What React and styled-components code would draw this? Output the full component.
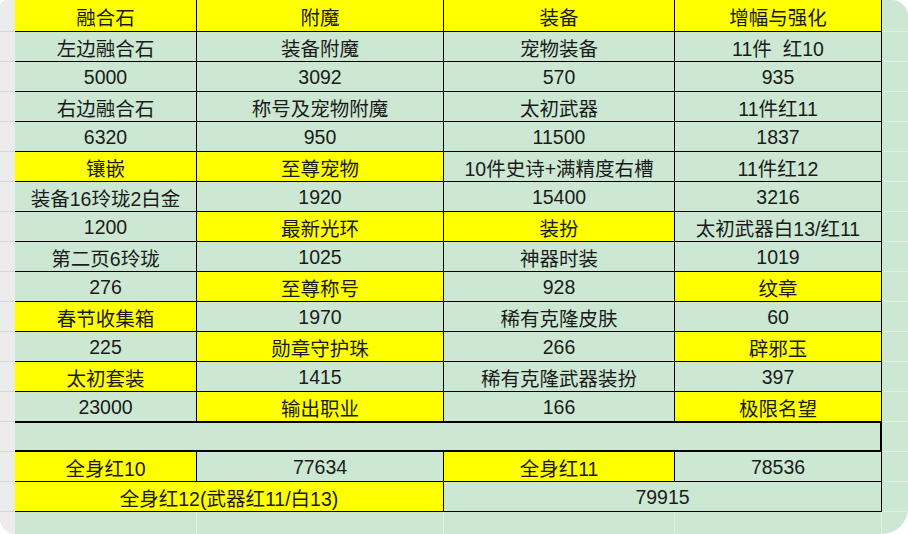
import React from 'react';
import styled, { createGlobalStyle } from 'styled-components';

const GlobalStyle = createGlobalStyle`
  html, body {
    margin: 0;
    padding: 0;
    background: #ffffff;
  }
  * {
    box-sizing: border-box;
  }
`;

const Window = styled.div`
  width: 908px;
  height: 534px;
  display: flex;
  overflow: hidden;
  background-color: #cce8d3;
  border-radius: 8px 16px 26px 16px;
`;

const RowHeaders = styled.div`
  width: 15px;
  display: flex;
  flex-direction: column;
  background-color: #ececec;
`;

const RowHead = styled.div`
  height: ${(p) => (p.$first ? 32 : 30)}px;
  flex: none;
  border-bottom: 1px solid #d6d6d6;
`;

const Sheet = styled.div`
  flex: 1;
  display: grid;
  grid-template-columns: 182px 247px 231px 207px 1fr;
  grid-template-rows: 32px;
  grid-auto-rows: 30px;
  font-family: "Liberation Sans", "Noto Sans CJK SC", sans-serif;
  font-size: 19.5px;
  color: #1b1b1b;
`;

const Cell = styled.div`
  grid-column: span ${(p) => p.$span || 1};
  display: flex;
  align-items: center;
  justify-content: center;
  white-space: nowrap;
  background-color: ${(p) => (p.$fill === 'y' ? '#ffff00' : '#cce8d3')};
  border-right: 1px solid #000;
  border-bottom: 1px solid #000;
  padding-top: 1px;
`;

// the empty separator row drawn with a heavy outline
const BlankBand = styled.div`
  grid-column: span 4;
  border-top: 1px solid #000;
  border-right: 2px solid #000;
  border-bottom: 2px solid #000;
`;

const Filler = styled.div`
  border-bottom: 1px solid #e0f0e4;
`;

const FootCell = styled.div`
  border-right: 1px solid #ddeee2;
`;

const rows = [
  [['融合石', 'y'], ['附魔', 'y'], ['装备', 'y'], ['增幅与强化', 'y']],
  [['左边融合石'], ['装备附魔'], ['宠物装备'], ['11件\u00a0\u00a0红10']],
  [['5000'], ['3092'], ['570'], ['935']],
  [['右边融合石'], ['称号及宠物附魔'], ['太初武器'], ['11件红11']],
  [['6320'], ['950'], ['11500'], ['1837']],
  [['镶嵌', 'y'], ['至尊宠物', 'y'], ['10件史诗+满精度右槽'], ['11件红12']],
  [['装备16玲珑2白金'], ['1920'], ['15400'], ['3216']],
  [['1200'], ['最新光环', 'y'], ['装扮', 'y'], ['太初武器白13/红11']],
  [['第二页6玲珑'], ['1025'], ['神器时装'], ['1019']],
  [['276'], ['至尊称号', 'y'], ['928'], ['纹章', 'y']],
  [['春节收集箱', 'y'], ['1970'], ['稀有克隆皮肤'], ['60']],
  [['225'], ['勋章守护珠', 'y'], ['266'], ['辟邪玉', 'y']],
  [['太初套装', 'y'], ['1415'], ['稀有克隆武器装扮'], ['397']],
  [['23000'], ['输出职业', 'y'], ['166'], ['极限名望', 'y']],
];

const totals = [
  [['全身红10', 'y'], ['77634'], ['全身红11', 'y'], ['78536']],
  [['全身红12(武器红11/白13)', 'y', 2], ['79915', 'g', 2]],
];

const renderRow = (row, i) => (
  <React.Fragment key={i}>
    {row.map(([text, fill, span], j) => (
      <Cell key={j} $fill={fill} $span={span}>
        {text}
      </Cell>
    ))}
    <Filler />
  </React.Fragment>
);

const App = () => (
  <>
    <GlobalStyle />
    <Window>
      <RowHeaders>
        {Array.from({ length: 18 }, (_, i) => (
          <RowHead key={i} $first={i === 0} />
        ))}
      </RowHeaders>
      <Sheet>
        {rows.map(renderRow)}
        <BlankBand />
        <Filler />
        {totals.map((row, i) => renderRow(row, i + 100))}
        <FootCell />
        <FootCell />
        <FootCell />
        <FootCell />
        <FootCell />
      </Sheet>
    </Window>
  </>
);

export default App;
